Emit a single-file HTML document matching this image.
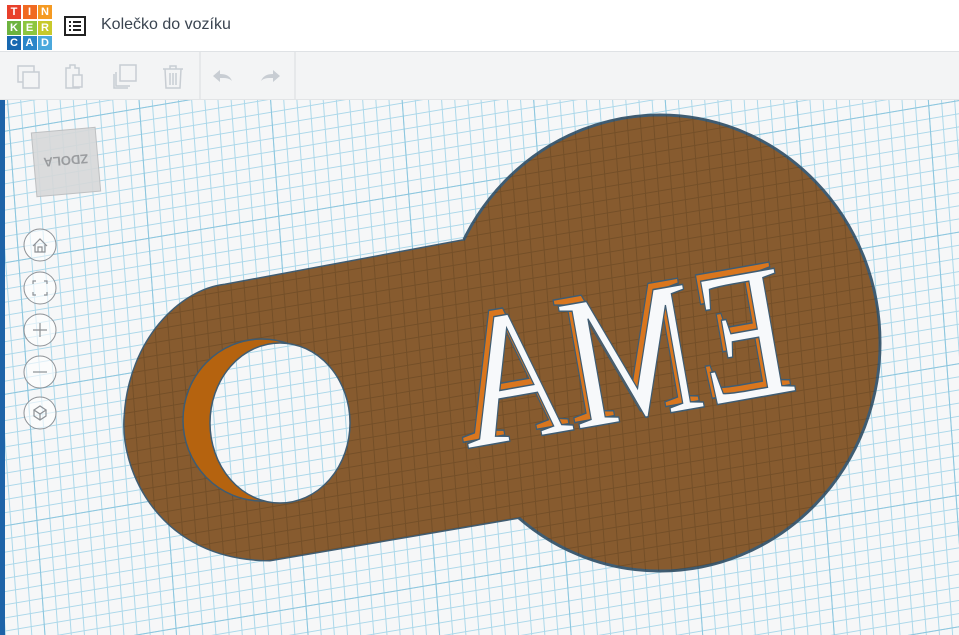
<!DOCTYPE html>
<html><head><meta charset="utf-8"><style>
html,body{margin:0;padding:0;width:959px;height:635px;overflow:hidden;background:#f6f7f8;font-family:"Liberation Sans",sans-serif}
#top{position:absolute;left:0;top:0;width:959px;height:52px;background:#fff;border-bottom:1px solid #dfe2e5;box-sizing:border-box}
#tb{position:absolute;left:0;top:52px;width:959px;height:48px;background:#f3f4f5;border-bottom:1px solid #e2e4e6;box-sizing:border-box}
.logo{position:absolute;left:7px;top:5px;width:45px;height:45px;display:grid;grid-template-columns:repeat(3,14px);grid-gap:1.5px}
.logo div{width:14px;height:14px;color:#fff;font-size:11px;font-weight:bold;text-align:center;line-height:14px}
</style></head><body>
<svg width="959" height="635" style="position:absolute;left:0;top:0">
<defs>
<pattern id="g" width="13" height="13" patternUnits="userSpaceOnUse" patternTransform="matrix(1,-0.17,0.07,1,0,0)">
<path d="M0 0.5H13M0.5 0V13" stroke="#acd8ea" stroke-width="1" fill="none"/>
</pattern>
<pattern id="G" width="130" height="130" patternUnits="userSpaceOnUse" patternTransform="matrix(1,-0.17,0.07,1,0,0)">
<path d="M0 0.5H130M0.5 0V130" stroke="#8cc6de" stroke-width="1" fill="none"/>
</pattern>
<pattern id="d" width="13" height="13" patternUnits="userSpaceOnUse" patternTransform="matrix(1,-0.17,0.07,1,0,0)">
<path d="M0 0.5H13M0.5 0V13" stroke="rgba(40,30,10,0.2)" stroke-width="1" fill="none"/>
</pattern>
<clipPath id="pc">
<path d="M225 285 L461 241 L560 230 L580 510 L521 517 L270 560 C160 560 120 470 125 415 C130 340 180 290 225 285Z"/>
<ellipse cx="660" cy="343" rx="220" ry="228"/>
</clipPath>
</defs>
<rect x="0" y="100" width="959" height="535" fill="#f6f7f8"/>
<rect x="0" y="100" width="959" height="535" fill="url(#g)"/>
<rect x="0" y="100" width="959" height="535" fill="url(#G)"/>
<rect x="0" y="0" width="5" height="635" fill="#1e63a8"/>
<!-- plate -->
<g stroke="#3f5c72" stroke-width="3" fill="#875b2f">
<path d="M225 285 L461 241 L521 517 L270 560 C160 560 120 470 125 415 C130 340 180 290 225 285Z"/>
<ellipse cx="660" cy="343" rx="220" ry="228"/>
</g>
<g fill="#875b2f">
<path d="M225 285 L461 241 L560 230 L580 510 L521 517 L270 560 C160 560 120 470 125 415 C130 340 180 290 225 285Z"/>
<ellipse cx="660" cy="343" rx="218.5" ry="226.5"/>
</g>
<g clip-path="url(#pc)"><rect x="100" y="100" width="800" height="500" fill="url(#d)"/></g>
<!-- hole -->
<ellipse cx="262" cy="420" rx="79" ry="81" fill="#b5630f" stroke="#3f5c72" stroke-width="1.5"/>
<ellipse cx="280" cy="423" rx="70" ry="80" fill="#f6f7f8"/>
<ellipse cx="280" cy="423" rx="70" ry="80" fill="url(#g)" stroke="#3f5c72" stroke-width="1.5"/>
<!-- letters -->
<g transform="translate(800,390) rotate(-10) scale(-0.8,1)">
<text x="5" y="-7" font-family="Liberation Serif,serif" font-size="190" fill="#d9761e" stroke="#3f5c72" stroke-width="1.5">EMA</text>
<text x="0" y="0" font-family="Liberation Serif,serif" font-size="190" fill="#f7f9fb" stroke="#3f5c72" stroke-width="1.5">EMA</text>
</g>
<!-- view cube -->
<g transform="rotate(-5 66 162)">
<rect x="34" y="130" width="64" height="64" fill="#d7d8d9" stroke="#b9bbbd" opacity="0.9"/>
<text x="66" y="168" transform="rotate(180 66 162)" text-anchor="middle" font-size="13" font-weight="bold" fill="#9a9c9f">ZDOLA</text>
</g>
<!-- nav buttons -->
<g fill="rgba(255,255,255,0.6)" stroke="#8d9196" stroke-width="1">
<circle cx="40" cy="245" r="16"/><circle cx="40" cy="288" r="16"/><circle cx="40" cy="330" r="16"/><circle cx="40" cy="372" r="16"/><circle cx="40" cy="413" r="16"/>
</g>
<g stroke="#8d9196" stroke-width="1.2" fill="none">
<path d="M33 246 L40 239 L47 246 M35 244 V252 H45 V244 M38 252 V247 H42 V252"/>
<path d="M33 284 V281 H36 M44 281 H47 V284 M47 292 V295 H44 M36 295 H33 V292"/>
<path d="M33 330 H47 M40 323 V337"/>
<path d="M33 372 H47"/>
<path d="M34 410 L40 406 L46 410 L40 414 Z M34 410 V416 L40 420 L46 416 V410 M40 414 V420"/>
</g>
</svg>
<div id="top">
<div class="logo">
<div style="background:#e8402b">T</div><div style="background:#f06a22">I</div><div style="background:#f59a22">N</div>
<div style="background:#6db33f">K</div><div style="background:#8dc63f">E</div><div style="background:#c8c92b">R</div>
<div style="background:#1868b0">C</div><div style="background:#2a86c9">A</div><div style="background:#4ba8dc">D</div>
</div>
<svg width="22" height="20" style="position:absolute;left:64px;top:16px"><rect x="1" y="1" width="20" height="18" fill="none" stroke="#222" stroke-width="2"/><path d="M5 6h2M9 6h8M5 10h2M9 10h8M5 14h2M9 14h8" stroke="#222" stroke-width="2"/></svg>
<div style="position:absolute;left:101px;top:16px;font-size:16px;color:#3a4450">Kolečko do vozíku</div>
</div>
<div id="tb">
<svg width="300" height="48" style="position:absolute;left:0;top:0" fill="none" stroke="#c8cdd3" stroke-width="1.5">
<rect x="18" y="14" width="16" height="16"/><rect x="23" y="20" width="16" height="16" fill="#f3f4f5"/>
<path d="M66 16h4v-3h5v3h4v20h-13z"/><rect x="73" y="23" width="9" height="12" fill="#f3f4f5"/>
<path d="M114 22v14h14"/><path d="M116 20v14h14"/><rect x="120" y="13" width="16" height="16" fill="#f3f4f5"/>
<path d="M163 17h20M170 17v-3h6v3M165 17l1 19h14l1-19M170 21v12M173 21v12M176 21v12"/>
<path d="M200 0v48M295 0v48" stroke="#e1e3e6"/>
<path d="M213 24l7-6v4c6 0 10 2 12 7-3-3-6-3-12-3v4z" fill="#c8cdd3" stroke="none"/>
<path d="M280 24l-7-6v4c-6 0-10 2-12 7 3-3 6-3 12-3v4z" fill="#c8cdd3" stroke="none"/>
</svg>
</div>
</body></html>
